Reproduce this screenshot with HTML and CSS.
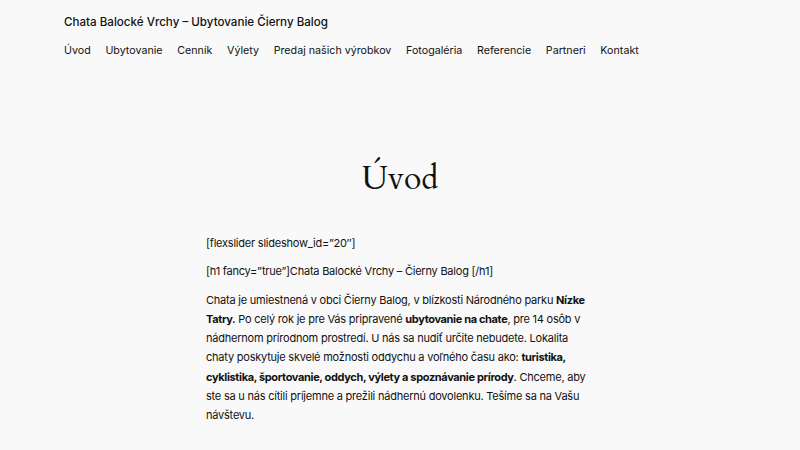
FILE: index.html
```html
<!DOCTYPE html>
<html lang="sk">
<head>
<meta charset="utf-8">
<title>Úvod – Chata Balocké Vrchy</title>
<link rel="stylesheet" href="styles.css">
</head>
<body>
<header class="site-header">
  <p class="site-title">Chata Balocké Vrchy – Ubytovanie Čierny Balog</p>
  <nav class="site-nav">
    <a href="#">Úvod</a>
    <a href="#">Ubytovanie</a>
    <a href="#">Cenník</a>
    <a href="#">Výlety</a>
    <a href="#">Predaj našich výrobkov</a>
    <a href="#">Fotogaléria</a>
    <a href="#">Referencie</a>
    <a href="#">Partneri</a>
    <a href="#">Kontakt</a>
  </nav>
</header>
<main class="content">
  <h1 class="page-title">Úvod</h1>
  <div class="entry">
    <p>[flexslider slideshow_id=”20″]</p>
    <p>[h1 fancy=”true”]Chata Balocké Vrchy – Čierny Balog [/h1]</p>
    <p>Chata je umiestnená v obci Čierny Balog, v blízkosti Národného parku <strong>Nízke Tatry.</strong> Po celý rok je pre Vás pripravené <strong>ubytovanie na chate</strong>, pre 14 osôb v nádhernom prírodnom prostredí. U nás sa nudiť určite nebudete. Lokalita chaty poskytuje skvelé možnosti oddychu a voľného času ako: <strong>turistika, cyklistika, športovanie, oddych, výlety a spoznávanie prírody</strong>. Chceme, aby ste sa u nás cítili príjemne a prežili nádhernú dovolenku. Tešíme sa na Vašu návštevu.</p>
    <p class="spaced">[flexslider slideshow_id=”21″]</p>
  </div>
</main>
</body>
</html>
```
FILE: styles.css
```css
html, body {
  margin: 0;
  padding: 0;
}

body {
  background: #f9f9f9;
  color: #111111;
  font-family: Inter, "Noto Sans", sans-serif;
  font-size: 11px;
}

.site-header {
  padding: 13px 64px 0;
}

.site-title {
  margin: 0;
  font-size: 11.6px;
  font-weight: 500;
  line-height: 18px;
}

.site-nav {
  display: flex;
  gap: 14.7px;
  margin-top: 11px;
  line-height: 18px;
}

.site-nav a {
  color: #111111;
  text-decoration: none;
  font-size: 10.7px;
}

.content {
  width: 388px;
  margin: 0 auto;
}

.page-title {
  margin: 95px 0 0;
  text-align: center;
  font-family: Cardo, "Liberation Serif", "DejaVu Serif", serif;
  font-weight: 400;
  font-size: 32px;
  line-height: 48px;
}

.entry {
  margin-top: 31px;
}

.entry p {
  margin: 0 0 9px;
  line-height: 19.3px;
  letter-spacing: -0.22px;
}

.entry strong {
  font-weight: 700;
  letter-spacing: -0.35px;
}

.entry .spaced {
  margin-top: 32px;
}
```
